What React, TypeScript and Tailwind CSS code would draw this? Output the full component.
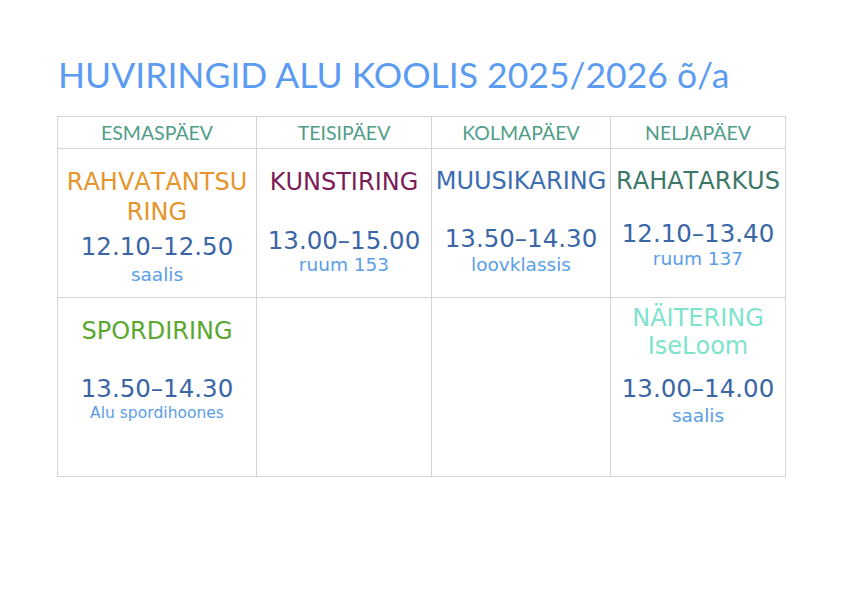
const dejavu = "font-['DejaVu_Sans',sans-serif] [font-kerning:none]";
const lato = "font-['Lato',sans-serif]";

const days = ["ESMASPÄEV", "TEISIPÄEV", "KOLMAPÄEV", "NELJAPÄEV"];

export default function App() {
  return (
    <div className="w-[842px] h-[595px] bg-white relative overflow-hidden">
      <div className="pl-[57px] pt-[53px]">
        <h1 className={`${lato} text-[35.5px] leading-[44px] text-[#5b9bf2] font-normal pl-[1px]`}>
          HUVIRINGID ALU KOOLIS 2025/2026 õ/a
        </h1>

        <div className="mt-[19px] grid grid-cols-[199px_175px_179px_175px] grid-rows-[32px_149px_179px] w-[729px] border-l border-t border-[#d4d4d4]">
          {days.map((d) => (
            <div
              key={d}
              className={`${lato} border-r border-b border-[#d4d4d4] flex items-center justify-center text-[19.5px] text-[#4f9d89]`}
            >
              {d}
            </div>
          ))}

          {/* rida 1 */}
          <div className={`${dejavu} border-r border-b border-[#d4d4d4] flex flex-col items-center pt-[18px] text-center`}>
            <div className="text-[24px] leading-[30px] text-[#e5952c]">
              RAHVATANTSU
              <br />
              RING
            </div>
            <div className="mt-[6px] text-[24.5px] leading-[28px] text-[#3a66a6]">12.10–12.50</div>
            <div className="mt-[4px] text-[18.5px] leading-[20px] text-[#5a9de9]">saalis</div>
          </div>
          <div className={`${dejavu} border-r border-b border-[#d4d4d4] flex flex-col items-center pt-[18px] text-center`}>
            <div className="text-[24px] leading-[30px] text-[#7b1c57]">KUNSTIRING</div>
            <div className="mt-[30px] text-[24.5px] leading-[28px] text-[#3a66a6]">13.00–15.00</div>
            <div className="mt-0 text-[18.5px] leading-[20px] text-[#5a9de9]">ruum 153</div>
          </div>
          <div className={`${dejavu} border-r border-b border-[#d4d4d4] flex flex-col items-center pt-[17px] text-center`}>
            <div className="text-[24px] leading-[30px] text-[#3c6db0] whitespace-nowrap">MUUSIKARING</div>
            <div className="mt-[29px] text-[24.5px] leading-[28px] text-[#3a66a6]">13.50–14.30</div>
            <div className="mt-[2px] text-[18.5px] leading-[20px] text-[#5a9de9]">loovklassis</div>
          </div>
          <div className={`${dejavu} border-r border-b border-[#d4d4d4] flex flex-col items-center pt-[17px] text-center`}>
            <div className="text-[24px] leading-[30px] text-[#3b7867] whitespace-nowrap">RAHATARKUS</div>
            <div className="mt-[24px] text-[24.5px] leading-[28px] text-[#3a66a6]">12.10–13.40</div>
            <div className="mt-[1px] text-[18.5px] leading-[20px] text-[#5a9de9]">ruum 137</div>
          </div>

          {/* rida 2 */}
          <div className={`${dejavu} border-r border-b border-[#d4d4d4] flex flex-col items-center pt-[18px] text-center`}>
            <div className="text-[24px] leading-[30px] text-[#5aa832]">SPORDIRING</div>
            <div className="mt-[29px] text-[24.5px] leading-[28px] text-[#3a66a6]">13.50–14.30</div>
            <div className="mt-[1px] text-[15.5px] leading-[18px] text-[#5a9de9]">Alu spordihoones</div>
          </div>
          <div className="border-r border-b border-[#d4d4d4]" />
          <div className="border-r border-b border-[#d4d4d4]" />
          <div className={`${dejavu} border-r border-b border-[#d4d4d4] flex flex-col items-center pt-[6px] text-center`}>
            <div className="text-[24px] leading-[28px] text-[#7ee3cb]">
              NÄITERING
              <br />
              IseLoom
            </div>
            <div className="mt-[15px] text-[24.5px] leading-[28px] text-[#3a66a6]">13.00–14.00</div>
            <div className="mt-[3px] text-[18.5px] leading-[20px] text-[#5a9de9]">saalis</div>
          </div>
        </div>
      </div>
    </div>
  );
}
